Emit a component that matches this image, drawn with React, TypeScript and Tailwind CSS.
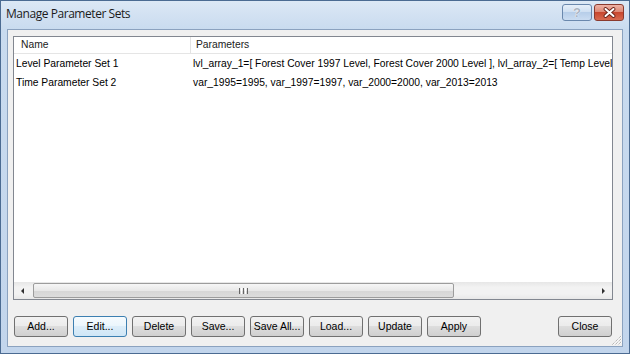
import clsx from "clsx";

const actions = ["Add...", "Edit...", "Delete", "Save...", "Save All...", "Load...", "Update", "Apply"];

const rows = [
  {
    name: "Level Parameter Set 1",
    params:
      "lvl_array_1=[ Forest Cover 1997 Level, Forest Cover 2000 Level ], lvl_array_2=[ Temp Level 1997, Temp Level 2000 ]",
  },
  {
    name: "Time Parameter Set 2",
    params: "var_1995=1995, var_1997=1997, var_2000=2000, var_2013=2013",
  },
];

function PushButton({ label, focused }: { label: string; focused?: boolean }) {
  return (
    <div
      className={clsx(
        "w-[54px] h-[21px] flex items-center justify-center rounded-[3px] border text-[10.5px] leading-none",
        focused
          ? "border-[#3c7fb1] bg-[linear-gradient(#f6fbfe_0%,#eaf5fc_50%,#dcedf9_50%,#cfe6f6_100%)]"
          : "border-[#707070] bg-[linear-gradient(#f2f2f2_0%,#ebebeb_50%,#dddddd_50%,#cfcfcf_100%)]"
      )}
    >
      {label}
    </div>
  );
}

function HelpButton() {
  return (
    <div className="w-[30px] h-[17px] flex items-center justify-center rounded-[3px] border border-[#6a88ad] bg-[linear-gradient(#e6eff9_0%,#cddef1_50%,#b7cee9_50%,#cadcf1_100%)]">
      <span className="text-[13px] font-bold leading-none text-[#a9b4c2] [text-shadow:0_0_1px_#ffffff,0_0_1px_#ffffff]">?</span>
    </div>
  );
}

function CloseButton() {
  return (
    <div className="w-[30px] h-[17px] flex items-center justify-center rounded-[3px] border border-[#8a3a2e] bg-[linear-gradient(#eeb3a6_0%,#dc8470_50%,#c8472f_50%,#d86a50_100%)]">
      <svg width="13" height="11" viewBox="0 0 13 11">
        <path d="M2.5 2 L10.5 9 M10.5 2 L2.5 9" stroke="#6b241a" strokeWidth="3.8" strokeLinecap="round" />
        <path d="M2.5 2 L10.5 9 M10.5 2 L2.5 9" stroke="#ffffff" strokeWidth="2" strokeLinecap="round" />
      </svg>
    </div>
  );
}

function SizeGrip() {
  return (
    <svg width="11" height="11" viewBox="0 0 11 11" className="absolute right-0 bottom-0">
      <path d="M10 1 L1 10 M10 4 L4 10 M10 7 L7 10" stroke="#a0a0a0" strokeWidth="1" strokeDasharray="1 1" />
      <path d="M11 1 L2 10 M11 4 L5 10 M11 7 L8 10" stroke="#ffffff" strokeWidth="1" strokeDasharray="1 1" />
    </svg>
  );
}

export default function App() {
  return (
    <div className="w-[630px] h-[354px] flex flex-col border border-[#4b6b92] bg-[linear-gradient(#dce8f5,#c9dbef_28px,#c2d5ec)] font-['Liberation_Sans',Arial,sans-serif] text-black select-none">
      {/* title bar */}
      <div className="h-[28px] flex items-start pl-[5px] pr-[5px] shrink-0">
        <div className="pt-[5px] text-[12px] tracking-[-0.45px] text-[#1b1b1b] font-['Open_Sans','Noto_Sans',sans-serif] leading-[16px]">
          Manage Parameter Sets
        </div>
        <div className="ml-auto flex gap-[2px] pt-[3px]">
          <HelpButton />
          <CloseButton />
        </div>
      </div>

      {/* client area */}
      <div className="relative flex-1 mx-[6px] mb-[6px] border border-[#8ba2bf] bg-[#f0f0f0] flex flex-col">
        {/* list view */}
        <div className="ml-[5px] mt-[6px] w-[600px] h-[264px] border border-[#828790] bg-white flex flex-col">
          <div className="h-[17px] flex border-b border-[#e5e5e5] text-[10.3px] text-[#222] shrink-0">
            <div className="w-[177px] pl-[7px] border-r border-[#e3e3e3] flex items-center">Name</div>
            <div className="pl-[5px] flex items-center">Parameters</div>
          </div>
          <div className="flex-1 overflow-hidden">
            {rows.map((r) => (
              <div key={r.name} className="h-[19px] flex items-center text-[10.3px] whitespace-nowrap">
                <div className="w-[177px] pl-[2px] shrink-0">{r.name}</div>
                <div className="pl-[2px]">{r.params}</div>
              </div>
            ))}
          </div>
          {/* horizontal scroll bar */}
          <div className="h-[17px] flex items-center shrink-0 bg-[linear-gradient(#e6e6e6,#f2f2f2_30%,#f2f2f2_70%,#e8e8e8)]">
            <div className="w-[17px] h-full flex items-center justify-center">
              <div className="w-0 h-0 border-y-[3px] border-y-transparent border-r-[3px] border-r-[#303030]" />
            </div>
            <div className="ml-[2px] w-[421px] h-[15px] rounded-[2px] border border-[#9c9c9c] bg-[linear-gradient(#f6f6f6,#e8e8e8_50%,#d6d6d6_51%,#dcdcdc)] flex items-center justify-center gap-[1px]">
              <div className="w-[1px] h-[6px] bg-[#666]" />
              <div className="w-[1px] h-[6px] bg-[#fff]" />
              <div className="w-[1px] h-[6px] bg-[#666]" />
              <div className="w-[1px] h-[6px] bg-[#fff]" />
              <div className="w-[1px] h-[6px] bg-[#666]" />
            </div>
            <div className="ml-auto w-[17px] h-full flex items-center justify-center">
              <div className="w-0 h-0 border-y-[3px] border-y-transparent border-l-[3px] border-l-[#303030]" />
            </div>
          </div>
        </div>

        {/* buttons */}
        <div className="mt-[16px] pl-[6px] pr-[10px] flex gap-[5px]">
          {actions.map((a) => (
            <PushButton key={a} label={a} focused={a === "Edit..."} />
          ))}
          <div className="ml-auto">
            <PushButton label="Close" />
          </div>
        </div>

        <SizeGrip />
      </div>
    </div>
  );
}
